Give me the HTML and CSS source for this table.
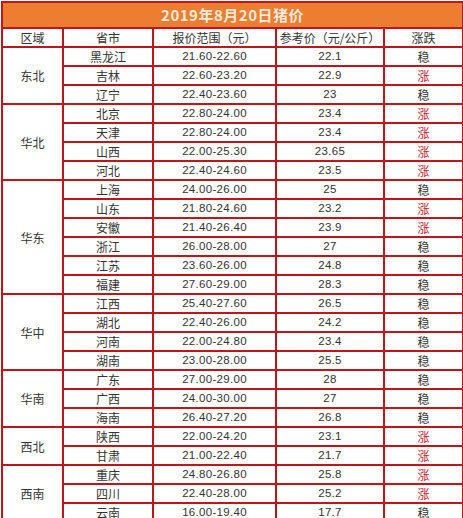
FILE: index.html
```html
<!DOCTYPE html>
<html lang="zh">
<head>
<meta charset="utf-8">
<link rel="stylesheet" href="styles.css">
</head>
<body>
<table class="price">
  <colgroup>
    <col class="c1"><col class="c2"><col class="c3"><col class="c4"><col class="c5">
  </colgroup>
  <tr class="title"><td colspan="5">2019年8月20日猪价</td></tr>
  <tr class="head"><td>区域</td><td>省市</td><td>报价范围（元）</td><td>参考价（元/公斤）</td><td>涨跌</td></tr>
  <tr><td rowspan="3">东北</td><td>黑龙江</td><td class="n">21.60-22.60</td><td class="n">22.1</td><td>稳</td></tr>
  <tr><td>吉林</td><td class="n">22.60-23.20</td><td class="n">22.9</td><td class="up">涨</td></tr>
  <tr><td>辽宁</td><td class="n">22.40-23.60</td><td class="n">23</td><td>稳</td></tr>
  <tr><td rowspan="4">华北</td><td>北京</td><td class="n">22.80-24.00</td><td class="n">23.4</td><td class="up">涨</td></tr>
  <tr><td>天津</td><td class="n">22.80-24.00</td><td class="n">23.4</td><td class="up">涨</td></tr>
  <tr><td>山西</td><td class="n">22.00-25.30</td><td class="n">23.65</td><td class="up">涨</td></tr>
  <tr><td>河北</td><td class="n">22.40-24.60</td><td class="n">23.5</td><td class="up">涨</td></tr>
  <tr><td rowspan="6">华东</td><td>上海</td><td class="n">24.00-26.00</td><td class="n">25</td><td>稳</td></tr>
  <tr><td>山东</td><td class="n">21.80-24.60</td><td class="n">23.2</td><td class="up">涨</td></tr>
  <tr><td>安徽</td><td class="n">21.40-26.40</td><td class="n">23.9</td><td class="up">涨</td></tr>
  <tr><td>浙江</td><td class="n">26.00-28.00</td><td class="n">27</td><td>稳</td></tr>
  <tr><td>江苏</td><td class="n">23.60-26.00</td><td class="n">24.8</td><td>稳</td></tr>
  <tr><td>福建</td><td class="n">27.60-29.00</td><td class="n">28.3</td><td>稳</td></tr>
  <tr><td rowspan="4">华中</td><td>江西</td><td class="n">25.40-27.60</td><td class="n">26.5</td><td>稳</td></tr>
  <tr><td>湖北</td><td class="n">22.40-26.00</td><td class="n">24.2</td><td>稳</td></tr>
  <tr><td>河南</td><td class="n">22.00-24.80</td><td class="n">23.4</td><td>稳</td></tr>
  <tr><td>湖南</td><td class="n">23.00-28.00</td><td class="n">25.5</td><td>稳</td></tr>
  <tr><td rowspan="3">华南</td><td>广东</td><td class="n">27.00-29.00</td><td class="n">28</td><td>稳</td></tr>
  <tr><td>广西</td><td class="n">24.00-30.00</td><td class="n">27</td><td>稳</td></tr>
  <tr><td>海南</td><td class="n">26.40-27.20</td><td class="n">26.8</td><td>稳</td></tr>
  <tr><td rowspan="2">西北</td><td>陕西</td><td class="n">22.00-24.20</td><td class="n">23.1</td><td class="up">涨</td></tr>
  <tr><td>甘肃</td><td class="n">21.00-22.40</td><td class="n">21.7</td><td class="up">涨</td></tr>
  <tr><td rowspan="3">西南</td><td>重庆</td><td class="n">24.80-26.80</td><td class="n">25.8</td><td class="up">涨</td></tr>
  <tr><td>四川</td><td class="n">22.40-28.00</td><td class="n">25.2</td><td class="up">涨</td></tr>
  <tr><td>云南</td><td class="n">16.00-19.40</td><td class="n">17.7</td><td>稳</td></tr>
</table>
</body>
</html>
```
FILE: styles.css
```css
html, body {
  margin: 0;
  padding: 0;
  background: #ffffff;
}
body {
  padding: 1px 0 0 1px;
}
.price {
  border-collapse: collapse;
  table-layout: fixed;
  width: 461px;
  font-family: "Noto Sans CJK SC", "Noto Sans", sans-serif;
  font-size: 12px;
  color: #333333;
}
.c1 { width: 61px; }
.c2 { width: 90px; }
.c3 { width: 123px; }
.c4 { width: 108px; }
.c5 { width: 79px; }
.price td {
  border: 2px solid #c0161b;
  padding: 0;
  height: 17px;
  line-height: 17px;
  text-align: center;
  white-space: nowrap;
  overflow: hidden;
}
.price .title td {
  background: #ed7d31;
  color: #fdeada;
  font-weight: bold;
  font-size: 15px;
  height: 24px;
  line-height: 24px;
  letter-spacing: 0.5px;
}
.price td.n {
  font-family: "Liberation Sans", sans-serif;
  font-size: 11.5px;
  letter-spacing: 0.3px;
}
.price td.up {
  color: #d0202e;
}
```
